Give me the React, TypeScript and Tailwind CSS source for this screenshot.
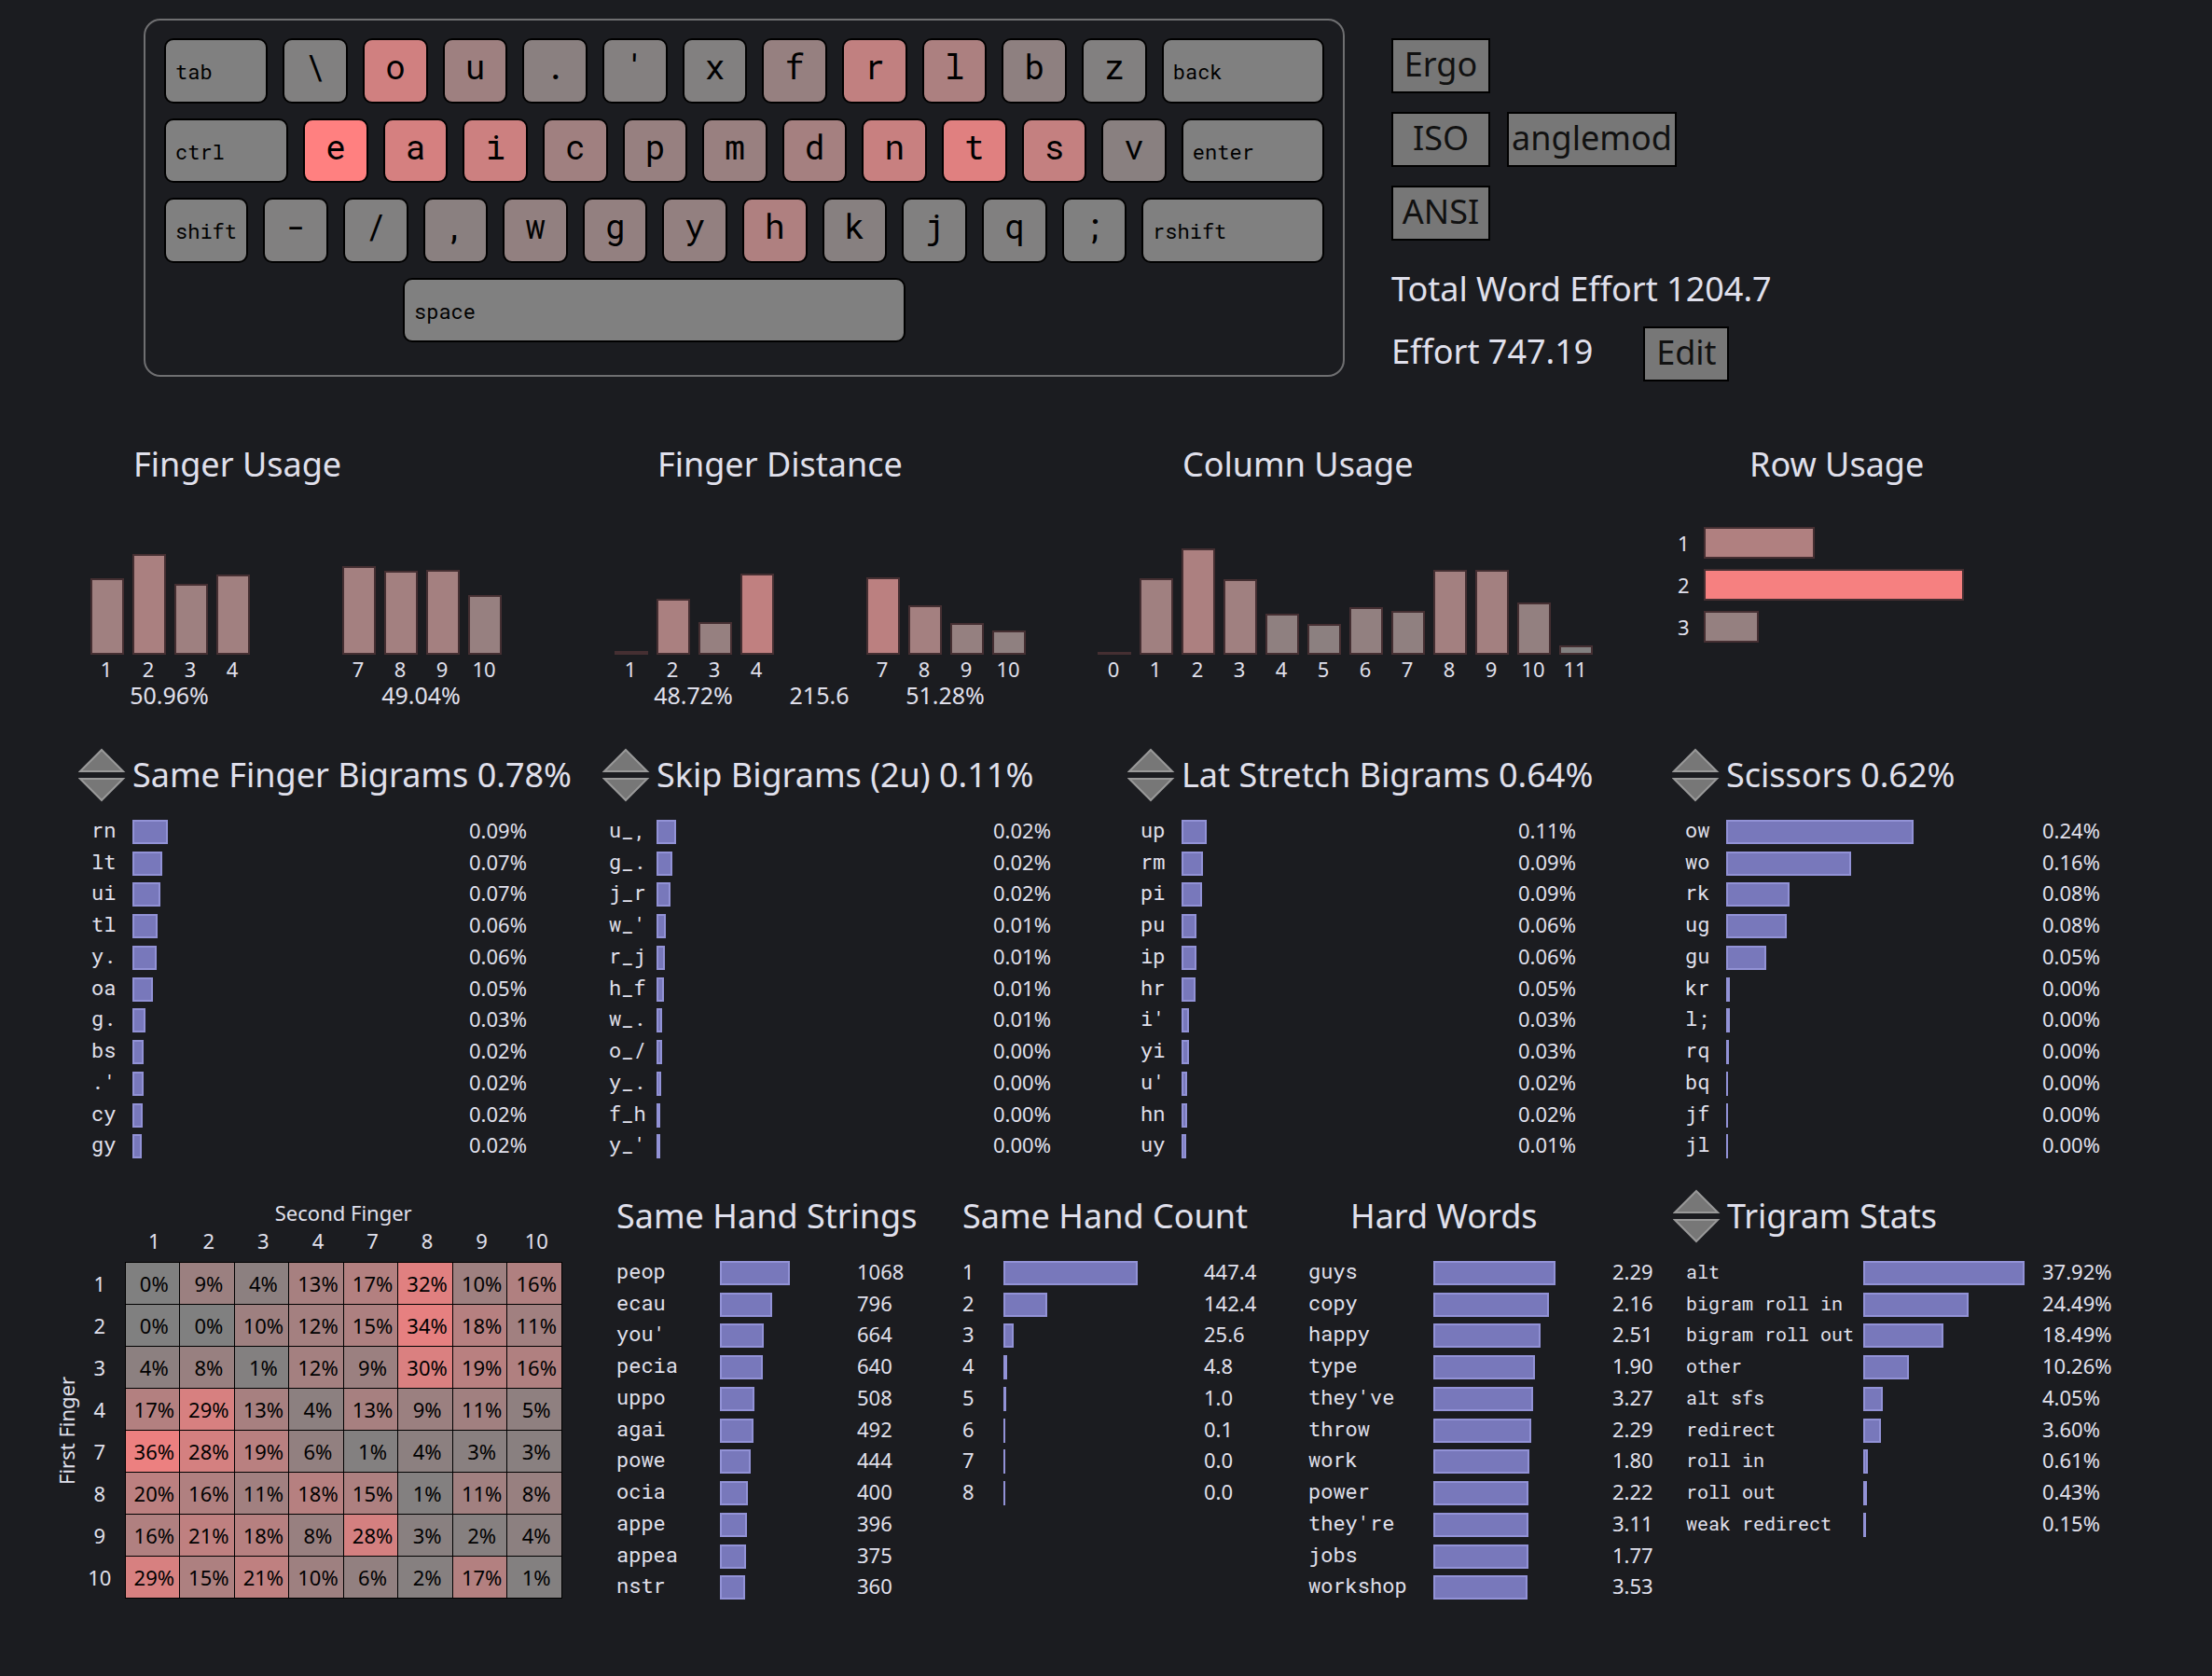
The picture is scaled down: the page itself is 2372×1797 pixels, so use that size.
import type { ReactNode } from "react";

const SANS = "font-['Noto_Sans',sans-serif]";
const MONO = "font-['Roboto_Mono','Noto_Sans_Mono','Liberation_Mono',monospace]";

// Heat colour: grey at 128, full red at 255.
const heat = (red: number) => `rgb(${red}, 128, 128)`;

type KeyDef = { label: string; size?: number; red?: number };

const KEY_ROWS: KeyDef[][] = [
  [
    { label: "tab", size: 112 },
    { label: "\\", red: 129 },
    { label: "o", red: 208 },
    { label: "u", red: 158 },
    { label: ".", red: 138 },
    { label: "'", red: 132 },
    { label: "x", red: 130 },
    { label: "f", red: 150 },
    { label: "r", red: 193 },
    { label: "l", red: 172 },
    { label: "b", red: 142 },
    { label: "z", red: 130 },
    { label: "back", size: 175 },
  ],
  [
    { label: "ctrl", size: 134 },
    { label: "e", red: 255 },
    { label: "a", red: 213 },
    { label: "i", red: 204 },
    { label: "c", red: 160 },
    { label: "p", red: 151 },
    { label: "m", red: 153 },
    { label: "d", red: 165 },
    { label: "n", red: 200 },
    { label: "t", red: 224 },
    { label: "s", red: 196 },
    { label: "v", red: 137 },
    { label: "enter", size: 154 },
  ],
  [
    { label: "shift", size: 91 },
    { label: "-", red: 129 },
    { label: "/", red: 129 },
    { label: ",", red: 138 },
    { label: "w", red: 146 },
    { label: "g", red: 147 },
    { label: "y", red: 147 },
    { label: "h", red: 175 },
    { label: "k", red: 135 },
    { label: "j", red: 129 },
    { label: "q", red: 129 },
    { label: ";", red: 128 },
    { label: "rshift", size: 197 },
  ],
];

function Key({ label, size, red = 128 }: KeyDef) {
  return (
    <kbd
      className={`${MONO} block min-w-0 overflow-hidden rounded-[10px] border-2 border-black text-black ${
        size ? "pl-[10px] text-left text-[22px] leading-[67px]" : "text-center text-[36px] leading-[56px]"
      }`}
      style={{ backgroundColor: heat(red) }}
    >
      {label}
    </kbd>
  );
}

function Keyboard() {
  return (
    <div className="self-start rounded-[18px] border-2 border-[#6f6f71] px-5 pt-[19px] pb-[35px]">
      <div className="grid h-[326px] grid-rows-4 gap-4">
        {KEY_ROWS.map((row, i) => (
          <div
            key={i}
            className="grid gap-4"
            style={{ gridTemplateColumns: row.map((k) => `minmax(0, ${k.size ?? 70}fr)`).join(" ") }}
          >
            {row.map((k) => (
              <Key key={k.label} {...k} />
            ))}
          </div>
        ))}
        <div className="grid grid-cols-[240fr_539fr_433fr] gap-4">
          <span />
          <Key label="space" size={539} />
        </div>
      </div>
    </div>
  );
}

function BoxButton({ children, width }: { children: ReactNode; width: string }) {
  return (
    <button
      type="button"
      className={`h-[59px] border-2 border-black bg-[#777777] pb-[3px] text-center text-[36px] leading-[48px] text-[#111111] ${width}`}
    >
      {children}
    </button>
  );
}

function Heading({ children, className = "" }: { children: ReactNode; className?: string }) {
  return <h2 className={`text-[36px] leading-[48px] whitespace-nowrap ${className}`}>{children}</h2>;
}

type Col = [label: string, height: number, red: number];

function Columns({ data }: { data: Col[] }) {
  return (
    <div className="flex gap-[9px]">
      {data.map(([label, height, red]) => (
        <div key={label} className="w-[36px]">
          <div className="flex h-[180px] items-end">
            <div
              className="w-full ring-2 ring-[#452f32] ring-inset"
              style={{ height, backgroundColor: heat(red) }}
            />
          </div>
          <div className="pr-0.5 text-center text-[22px] leading-[30px]">{label}</div>
        </div>
      ))}
    </div>
  );
}

type HandsProps = { left: Col[]; right: Col[]; total?: string; leftPct: string; rightPct: string };

function Hands({ left, right, total, leftPct, rightPct }: HandsProps) {
  return (
    <div className="flex text-center text-[25px] leading-[26px]">
      <div>
        <Columns data={left} />
        <div className="pr-0.5">{leftPct}</div>
      </div>
      <div className="flex w-[99px] items-end justify-center pr-0.5">{total}</div>
      <div>
        <Columns data={right} />
        <div className="pr-0.5">{rightPct}</div>
      </div>
    </div>
  );
}

const ROW_USAGE: [string, number, number][] = [
  ["1", 119, 176],
  ["2", 279, 246],
  ["3", 59, 149],
];

type Stat = [label: string, width: number, value: string];

type BarListProps = {
  data: Stat[];
  labelWidth: string;
  trackWidth: string;
  labelFont?: string;
  className?: string;
};

function BarList({ data, labelWidth, trackWidth, labelFont = `${MONO} text-[22px]`, className = "" }: BarListProps) {
  return (
    <ul className={`mt-[15px] grid h-[371px] grid-rows-11 text-[22px] leading-[30px] whitespace-nowrap ${className}`}>
      {data.map(([label, width, value]) => (
        <li key={label} className="flex">
          <span className={`shrink-0 ${labelWidth} ${labelFont} leading-[30px]`}>{label}</span>
          <span className={`block shrink-0 pt-1 ${trackWidth}`}>
            <span className="block h-[26px] bg-[#7878bb] ring-2 ring-[#9292d6] ring-inset" style={{ width }} />
          </span>
          <span>{value}</span>
        </li>
      ))}
    </ul>
  );
}

function SortArrows({ name }: { name: string }) {
  return (
    <div className="flex w-[52px] shrink-0 flex-col gap-[6px]">
      <button type="button" aria-label={`Move ${name} up`} className="block">
        <svg viewBox="0 0 52 26" className="block h-[26px] w-[52px]">
          <polygon points="25,2 48,25 2,25" fill="#777777" stroke="#999999" strokeWidth="2" />
        </svg>
      </button>
      <button type="button" aria-label={`Move ${name} down`} className="block">
        <svg viewBox="0 0 52 26" className="block h-[26px] w-[52px]">
          <polygon points="25,24 48,1 2,1" fill="#777777" stroke="#999999" strokeWidth="2" />
        </svg>
      </button>
    </div>
  );
}

function SortableHeading({ name, value = "" }: { name: string; value?: string }) {
  return (
    <div className="flex h-[58px] items-center gap-[6px]">
      <SortArrows name={name} />
      <Heading>
        {name} {value}
      </Heading>
    </div>
  );
}

const SFB: Stat[] = [
  ["rn", 38, "0.09%"],
  ["lt", 32, "0.07%"],
  ["ui", 30, "0.07%"],
  ["tl", 27, "0.06%"],
  ["y.", 26, "0.06%"],
  ["oa", 22, "0.05%"],
  ["g.", 14, "0.03%"],
  ["bs", 12, "0.02%"],
  [".'", 12, "0.02%"],
  ["cy", 11, "0.02%"],
  ["gy", 10, "0.02%"],
];

const SKIP: Stat[] = [
  ["u_,", 21, "0.02%"],
  ["g_.", 17, "0.02%"],
  ["j_r", 15, "0.02%"],
  ["w_'", 10, "0.01%"],
  ["r_j", 9, "0.01%"],
  ["h_f", 8, "0.01%"],
  ["w_.", 6, "0.01%"],
  ["o_/", 6, "0.00%"],
  ["y_.", 5, "0.00%"],
  ["f_h", 4, "0.00%"],
  ["y_'", 4, "0.00%"],
];

const LAT: Stat[] = [
  ["up", 27, "0.11%"],
  ["rm", 23, "0.09%"],
  ["pi", 22, "0.09%"],
  ["pu", 16, "0.06%"],
  ["ip", 16, "0.06%"],
  ["hr", 15, "0.05%"],
  ["i'", 8, "0.03%"],
  ["yi", 8, "0.03%"],
  ["u'", 6, "0.02%"],
  ["hn", 6, "0.02%"],
  ["uy", 5, "0.01%"],
];

const SCISSORS: Stat[] = [
  ["ow", 201, "0.24%"],
  ["wo", 134, "0.16%"],
  ["rk", 68, "0.08%"],
  ["ug", 65, "0.08%"],
  ["gu", 43, "0.05%"],
  ["kr", 4, "0.00%"],
  ["l;", 4, "0.00%"],
  ["rq", 3, "0.00%"],
  ["bq", 2, "0.00%"],
  ["jf", 2, "0.00%"],
  ["jl", 2, "0.00%"],
];

const STRINGS: Stat[] = [
  ["peop", 75, "1068"],
  ["ecau", 56, "796"],
  ["you'", 47, "664"],
  ["pecia", 46, "640"],
  ["uppo", 37, "508"],
  ["agai", 36, "492"],
  ["powe", 33, "444"],
  ["ocia", 30, "400"],
  ["appe", 29, "396"],
  ["appea", 28, "375"],
  ["nstr", 27, "360"],
];

const COUNTS: Stat[] = [
  ["1", 144, "447.4"],
  ["2", 47, "142.4"],
  ["3", 11, "25.6"],
  ["4", 4, "4.8"],
  ["5", 3, "1.0"],
  ["6", 2, "0.1"],
  ["7", 2, "0.0"],
  ["8", 2, "0.0"],
];

const HARD: Stat[] = [
  ["guys", 131, "2.29"],
  ["copy", 124, "2.16"],
  ["happy", 115, "2.51"],
  ["type", 109, "1.90"],
  ["they've", 107, "3.27"],
  ["throw", 105, "2.29"],
  ["work", 103, "1.80"],
  ["power", 102, "2.22"],
  ["they're", 102, "3.11"],
  ["jobs", 102, "1.77"],
  ["workshop", 101, "3.53"],
];

const TRIGRAMS: Stat[] = [
  ["alt", 173, "37.92%"],
  ["bigram roll in", 113, "24.49%"],
  ["bigram roll out", 86, "18.49%"],
  ["other", 49, "10.26%"],
  ["alt sfs", 21, "4.05%"],
  ["redirect", 19, "3.60%"],
  ["roll in", 5, "0.61%"],
  ["roll out", 4, "0.43%"],
  ["weak redirect", 3, "0.15%"],
];

const FINGERS = [1, 2, 3, 4, 7, 8, 9, 10];

const TRANSITIONS = [
  [0, 9, 4, 13, 17, 32, 10, 16],
  [0, 0, 10, 12, 15, 34, 18, 11],
  [4, 8, 1, 12, 9, 30, 19, 16],
  [17, 29, 13, 4, 13, 9, 11, 5],
  [36, 28, 19, 6, 1, 4, 3, 3],
  [20, 16, 11, 18, 15, 1, 11, 8],
  [16, 21, 18, 8, 28, 3, 2, 4],
  [29, 15, 21, 10, 6, 2, 17, 1],
];

function FingerMatrix() {
  return (
    <div className="flex items-end self-start pt-[10px] text-[22px] leading-[30px]">
      <div className="h-[361px] w-[30px] rotate-180 text-center [writing-mode:vertical-rl]">First Finger</div>
      <table className="w-[517px] table-fixed border-collapse text-center">
        <colgroup>
          <col className="w-[48px]" />
        </colgroup>
        <thead>
          <tr>
            <td />
            <th colSpan={8} scope="colgroup" className="h-[30px] p-0 font-normal">
              Second Finger
            </th>
          </tr>
          <tr>
            <td />
            {FINGERS.map((f) => (
              <th key={f} scope="col" className="h-[38px] p-0 pl-1 align-top font-normal">
                {f}
              </th>
            ))}
          </tr>
        </thead>
        <tbody>
          {TRANSITIONS.map((row, i) => (
            <tr key={FINGERS[i]}>
              <th scope="row" className="h-[45px] p-0 pr-1.5 font-normal">
                {FINGERS[i]}
              </th>
              {row.map((p, j) => (
                <td
                  key={j}
                  className="h-[45px] border border-black p-0 pl-1 text-black"
                  style={{ backgroundColor: heat(128 + 3 * p) }}
                >
                  {p}%
                </td>
              ))}
            </tr>
          ))}
        </tbody>
      </table>
    </div>
  );
}

export default function App() {
  return (
    <main className={`${SANS} min-h-screen bg-[#1b1c20] pt-5 text-[#e0e0ec]`}>
      <section className="grid grid-cols-[1288fr_930fr] pl-[154px]">
        <Keyboard />
        <div className="pt-[21px] pl-[50px] text-[36px] leading-[48px]">
          <div className="flex flex-col gap-5">
            <BoxButton width="w-[106px]">Ergo</BoxButton>
            <div className="flex gap-[18px]">
              <BoxButton width="w-[106px]">ISO</BoxButton>
              <BoxButton width="w-[182px]">anglemod</BoxButton>
            </div>
            <BoxButton width="w-[106px]">ANSI</BoxButton>
          </div>
          <p className="mt-7">Total Word Effort 1204.7</p>
          <div className="mt-4 flex gap-[54px]">
            <p className="leading-[54px]">Effort 747.19</p>
            <BoxButton width="w-[92px]">Edit</BoxButton>
          </div>
        </div>
      </section>

      <section className="mt-[65px] grid grid-cols-[562fr_518fr_622fr_573fr] pl-[97px]">
        <div>
          <Heading className="pl-[46px]">Finger Usage</Heading>
          <Hands
            left={[["1", 82, 160], ["2", 108, 170], ["3", 76, 158], ["4", 86, 161]]}
            right={[["7", 95, 164], ["8", 90, 163], ["9", 91, 164], ["10", 64, 151]]}
            leftPct="50.96%"
            rightPct="49.04%"
          />
        </div>
        <div>
          <Heading className="pl-[46px]">Finger Distance</Heading>
          <Hands
            left={[["1", 4, 128], ["2", 60, 170], ["3", 35, 150], ["4", 87, 192]]}
            right={[["7", 83, 187], ["8", 53, 164], ["9", 34, 149], ["10", 26, 143]]}
            leftPct="48.72%"
            rightPct="51.28%"
            total="215.6"
          />
        </div>
        <div>
          <Heading className="pl-[91px]">Column Usage</Heading>
          <Columns
            data={[
              ["0", 3, 128],
              ["1", 82, 160],
              ["2", 114, 172],
              ["3", 81, 160],
              ["4", 44, 143],
              ["5", 33, 140],
              ["6", 51, 146],
              ["7", 47, 144],
              ["8", 91, 163],
              ["9", 91, 163],
              ["10", 56, 147],
              ["11", 10, 130],
            ]}
          />
        </div>
        <div>
          <Heading className="pl-[77px]">Row Usage</Heading>
          <ul className="mt-[43px] flex flex-col gap-[11px] text-[22px] leading-[34px]">
            {ROW_USAGE.map(([label, width, red]) => (
              <li key={label} className="flex">
                <span className="w-[28px]">{label}</span>
                <span
                  className="block h-[34px] ring-2 ring-[#452f32] ring-inset"
                  style={{ width, backgroundColor: heat(red) }}
                />
              </li>
            ))}
          </ul>
        </div>
      </section>

      <section className="mt-[44px] grid grid-cols-[562fr_563fr_584fr_579fr] pl-[84px]">
        <div>
          <SortableHeading name="Same Finger Bigrams" value="0.78%" />
          <BarList data={SFB} className="pl-[14px]" labelWidth="w-[44px]" trackWidth="w-[361px]" />
        </div>
        <div>
          <SortableHeading name="Skip Bigrams (2u)" value="0.11%" />
          <BarList data={SKIP} className="pl-[7px]" labelWidth="w-[51px]" trackWidth="w-[361px]" />
        </div>
        <div>
          <SortableHeading name="Lat Stretch Bigrams" value="0.64%" />
          <BarList data={LAT} className="pl-[14px]" labelWidth="w-[44px]" trackWidth="w-[361px]" />
        </div>
        <div>
          <SortableHeading name="Scissors" value="0.62%" />
          <BarList data={SCISSORS} className="pl-[14px]" labelWidth="w-[44px]" trackWidth="w-[339px]" />
        </div>
      </section>

      <section className="mt-[29px] grid grid-cols-[605fr_371fr_371fr_391fr_578fr] pl-[56px]">
        <FingerMatrix />
        <div>
          <Heading className="py-[5px]">Same Hand Strings</Heading>
          <BarList data={STRINGS} labelWidth="w-[111px]" trackWidth="w-[147px]" />
        </div>
        <div>
          <Heading className="py-[5px]">Same Hand Count</Heading>
          <BarList data={COUNTS} labelFont="text-[22px]" labelWidth="w-[44px]" trackWidth="w-[215px]" />
        </div>
        <div>
          <Heading className="py-[5px] pl-[45px]">Hard Words</Heading>
          <BarList data={HARD} labelWidth="w-[134px]" trackWidth="w-[192px]" />
        </div>
        <div>
          <SortableHeading name="Trigram Stats" />
          <BarList
            data={TRIGRAMS}
            className="pl-[14px]"
            labelFont={`${MONO} text-[20px]`}
            labelWidth="w-[190px]"
            trackWidth="w-[192px]"
          />
        </div>
      </section>
    </main>
  );
}
